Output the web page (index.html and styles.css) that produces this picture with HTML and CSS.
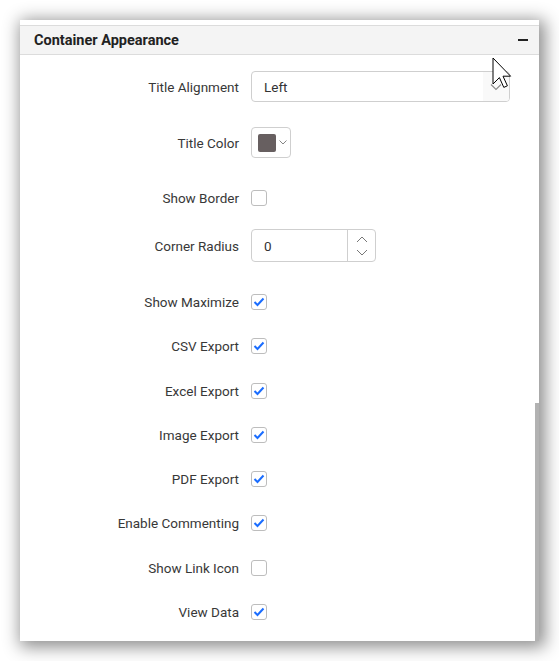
FILE: index.html
```html
<!DOCTYPE html>
<html>
<head>
<meta charset="utf-8">
<link rel="stylesheet" href="styles.css">
</head>
<body>
<div class="panel">
  <div class="header">
    <span class="header-title">Container Appearance</span>
    <span class="collapse"></span>
  </div>
  <div class="body">
    <div class="row r1">
      <div class="label">Title Alignment</div>
      <div class="dropdown">
        <span class="dd-text">Left</span>
        <span class="dd-icon">
          <svg width="12" height="8" viewBox="0 0 12 8"><path d="M1 1.5 L6 6.5 L11 1.5" fill="none" stroke="#8a8a8a" stroke-width="1.1"/></svg>
        </span>
      </div>
    </div>
    <div class="row r2">
      <div class="label">Title Color</div>
      <div class="colorpick">
        <span class="swatch"></span>
        <svg class="cp-arrow" width="8" height="5" viewBox="0 0 8 5"><path d="M0.5 0.5 L4 4 L7.5 0.5" fill="none" stroke="#777" stroke-width="0.9"/></svg>
      </div>
    </div>
    <div class="row r3">
      <div class="label">Show Border</div>
      <span class="cb"></span>
    </div>
    <div class="row r4">
      <div class="label">Corner Radius</div>
      <div class="numeric">
        <span class="num-text">0</span>
        <span class="spin">
          <svg width="12" height="7" viewBox="0 0 12 7"><path d="M1 6 L6 1 L11 6" fill="none" stroke="#777" stroke-width="1"/></svg>
          <svg width="12" height="7" viewBox="0 0 12 7"><path d="M1 1 L6 6 L11 1" fill="none" stroke="#777" stroke-width="1"/></svg>
        </span>
      </div>
    </div>
    <div class="row r5">
      <div class="label">Show Maximize</div>
      <span class="cb checked"><svg width="12" height="10" viewBox="0 0 12 10"><path d="M1.5 5 L4.5 8 L10.5 1.5" fill="none" stroke="#1a6dff" stroke-width="2"/></svg></span>
    </div>
    <div class="row rc">
      <div class="label">CSV Export</div>
      <span class="cb checked"><svg width="12" height="10" viewBox="0 0 12 10"><path d="M1.5 5 L4.5 8 L10.5 1.5" fill="none" stroke="#1a6dff" stroke-width="2"/></svg></span>
    </div>
    <div class="row rc">
      <div class="label">Excel Export</div>
      <span class="cb checked"><svg width="12" height="10" viewBox="0 0 12 10"><path d="M1.5 5 L4.5 8 L10.5 1.5" fill="none" stroke="#1a6dff" stroke-width="2"/></svg></span>
    </div>
    <div class="row rc">
      <div class="label">Image Export</div>
      <span class="cb checked"><svg width="12" height="10" viewBox="0 0 12 10"><path d="M1.5 5 L4.5 8 L10.5 1.5" fill="none" stroke="#1a6dff" stroke-width="2"/></svg></span>
    </div>
    <div class="row rc">
      <div class="label">PDF Export</div>
      <span class="cb checked"><svg width="12" height="10" viewBox="0 0 12 10"><path d="M1.5 5 L4.5 8 L10.5 1.5" fill="none" stroke="#1a6dff" stroke-width="2"/></svg></span>
    </div>
    <div class="row rc">
      <div class="label">Enable Commenting</div>
      <span class="cb checked"><svg width="12" height="10" viewBox="0 0 12 10"><path d="M1.5 5 L4.5 8 L10.5 1.5" fill="none" stroke="#1a6dff" stroke-width="2"/></svg></span>
    </div>
    <div class="row rc">
      <div class="label">Show Link Icon</div>
      <span class="cb"></span>
    </div>
    <div class="row rc">
      <div class="label">View Data</div>
      <span class="cb checked"><svg width="12" height="10" viewBox="0 0 12 10"><path d="M1.5 5 L4.5 8 L10.5 1.5" fill="none" stroke="#1a6dff" stroke-width="2"/></svg></span>
    </div>
  </div>
  <div class="scroll-thumb"></div>
  <svg class="cursor" width="22" height="34" viewBox="0 0 22 34">
    <path d="M1 1 L1 27 L7.4 20.6 L11.8 30.4 L15.4 28.8 L11 19.2 L18.6 19.2 Z" fill="#fff" stroke="#000" stroke-width="1" stroke-linejoin="miter"/>
  </svg>
</div>
</body>
</html>
```

FILE: styles.css
```css
* { box-sizing: border-box; }
html, body { margin: 0; padding: 0; background: #fff; }
body {
  font-family: Roboto, "Noto Sans", Arial, sans-serif;
  color: #333;
  padding: 20px 0 0 20px;
  height: 661px;
}
.panel {
  position: relative;
  width: 519px;
  height: 621px;
  background: #fff;
  box-shadow: 3px 3px 16px 3px rgba(0,0,0,0.45);
  padding-top: 5px;
  overflow: hidden;
}
.header {
  height: 30px;
  border-top: 1px solid #dcdcdc;
  border-bottom: 1px solid #dcdcdc;
  background: #f4f4f4;
  display: flex;
  align-items: center;
  justify-content: space-between;
  padding: 0 11px 0 14px;
}
.header-title {
  font-size: 14.5px;
  font-weight: 700;
  color: #222;
}
.collapse {
  width: 10px;
  height: 1.5px;
  background: #222;
}
.row {
  display: flex;
  align-items: center;
}
.label {
  width: 219px;
  text-align: right;
  font-size: 13.5px;
  color: #383838;
  margin-right: 12px;
  line-height: 16px;
}
.r1 { margin-top: 16px; height: 31px; }
.r2 { margin-top: 25px; height: 31px; }
.r3 { margin-top: 32px; height: 16px; }
.r4 { margin-top: 23px; height: 33px; }
.r5 { margin-top: 32px; height: 16px; }
.rc { margin-top: 28.3px; height: 16px; }

.dropdown {
  width: 259px;
  height: 31px;
  border: 1px solid #cfcfcf;
  border-radius: 4px;
  display: flex;
  align-items: center;
  justify-content: space-between;
  overflow: hidden;
}
.dd-text {
  padding-left: 12px;
  font-size: 13.5px;
  color: #333;
}
.dd-icon {
  width: 26px;
  height: 100%;
  background: #f9f9f9;
  display: flex;
  align-items: center;
  justify-content: center;
}
.colorpick {
  width: 40px;
  height: 31px;
  border: 1px solid #cfcfcf;
  border-radius: 4px;
  display: flex;
  align-items: center;
  padding-left: 6px;
}
.swatch {
  width: 18px;
  height: 18px;
  background: #675f60;
  border-radius: 2px;
}
.cp-arrow { margin-left: 3px; }
.cb {
  width: 16px;
  height: 16px;
  border: 1px solid #bdbdbd;
  border-radius: 3px;
  background: #fff;
  display: flex;
  align-items: center;
  justify-content: center;
}
.numeric {
  width: 125px;
  height: 33px;
  border: 1px solid #cfcfcf;
  border-radius: 4px;
  display: flex;
  align-items: center;
  justify-content: space-between;
}
.num-text {
  padding-left: 12px;
  font-size: 13.5px;
  color: #333;
}
.spin {
  width: 28px;
  height: 100%;
  border-left: 1px solid #cfcfcf;
  display: flex;
  flex-direction: column;
  align-items: center;
  justify-content: center;
  gap: 6px;
}
.spin svg { display: block; }
.scroll-thumb {
  position: absolute;
  right: 0;
  top: 383px;
  width: 4px;
  bottom: 0;
  background: #b2b2b2;
}
.cursor {
  position: absolute;
  left: 472px;
  top: 37px;
}
```
